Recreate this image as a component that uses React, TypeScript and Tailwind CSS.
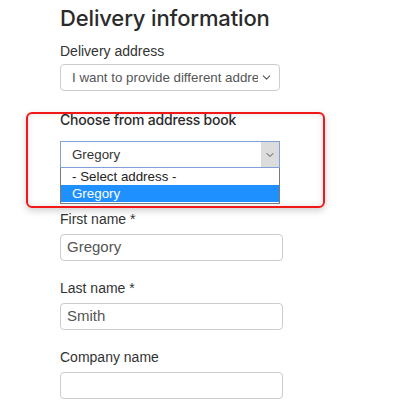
import { ChevronDown } from 'lucide-react';

const label = 'block text-[14px] leading-[20px] text-[#333] font-["Liberation_Sans",Arial,sans-serif]';

function TextField({ title, value }: { title: string; value?: string }) {
  return (
    <div>
      <label className={label}>{title}</label>
      <div className="mt-[5px] w-[223px] h-[27px] border border-[#ccc] rounded-[4px] bg-white flex items-center px-[6px] text-[15px] text-[#555] font-['Liberation_Sans',Arial,sans-serif]">
        {value}
      </div>
    </div>
  );
}

export default function App() {
  return (
    <div className="w-[404px] h-[409px] overflow-hidden bg-white pl-[60px] font-['Liberation_Sans',Arial,sans-serif]">
      <h1 className="pt-[3px] text-[22px] leading-[30px] font-medium text-[#2b2b2b] font-['Inter',sans-serif] tracking-[-0.15px]">
        Delivery information
      </h1>

      <label className={`${label} mt-[8px]`}>Delivery address</label>
      <div className="mt-[3px] w-[220px] h-[27px] border border-[#ccc] rounded-[4px] flex items-center pl-[11px] pr-[6px] text-[13.33px] text-[#555]">
        <span className="flex-1 whitespace-nowrap overflow-hidden">I want to provide different address</span>
        <ChevronDown className="w-[13px] h-[13px] text-[#555] ml-[2px]" strokeWidth={2} />
      </div>

      {/* address book, highlighted */}
      <div className="mt-[21px] -ml-[34px] w-[299px] h-[96px] border-2 border-[#f21818] rounded-[6px] pl-[32px] shadow-[0_3px_7px_rgba(0,0,0,0.18),inset_0_0_6px_rgba(0,0,0,0.12)]">
        <div className="-mt-[4px] text-[14px] leading-[20px] font-medium text-[#2b2b2b] font-['Inter',sans-serif] tracking-[-0.2px]">
          Choose from address book
        </div>
        <div className="mt-[11px] w-[220px] h-[27px] border border-[#7ea2d8] flex items-stretch text-[13.33px] text-[#333]">
          <span className="flex-1 flex items-center pl-[11px]">Gregory</span>
          <span className="w-[18px] bg-[#dcdcdc] flex items-center justify-center">
            <ChevronDown className="w-[12px] h-[12px] text-[#555]" strokeWidth={2} />
          </span>
        </div>
        <div className="w-[220px] border border-[#7a7a7a] border-t-0 bg-white text-[13.33px] leading-[17px] pb-[1px]">
          <div className="pl-[11px] text-[#222]">- Select address -</div>
          <div className="pl-[11px] bg-[#1e90ff] text-white">Gregory</div>
        </div>
      </div>

      <div className="mt-[1px] flex flex-col gap-[17px]">
        <TextField title="First name *" value="Gregory" />
        <TextField title="Last name *" value="Smith" />
        <TextField title="Company name" />
      </div>
    </div>
  );
}
